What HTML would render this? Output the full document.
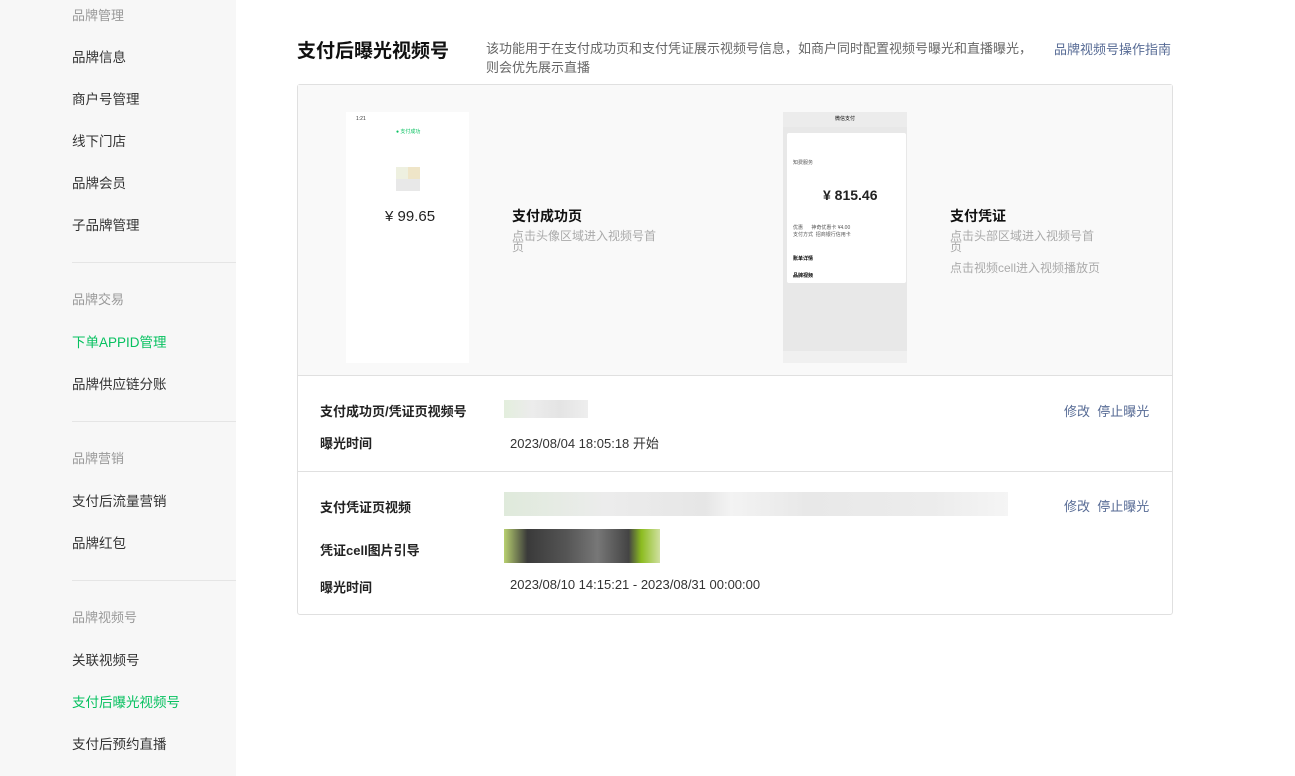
<!DOCTYPE html><html><head><meta charset="utf-8"><style>
body{margin:0;width:1295px;height:776px;overflow:hidden;background:#fff;font-family:"Liberation Sans","Noto Sans CJK SC",sans-serif;position:relative}
.a{position:absolute;white-space:nowrap}
.side{position:absolute;left:0;top:0;width:236px;height:776px;background:#f7f7f7}
.h{color:#999;font-size:13px;left:72px}
.i{color:#333;font-size:13.5px;left:72px}
.g{color:#07c160}
.d{position:absolute;left:72px;width:164px;height:1px;background:#e5e5e5}
.b{font-weight:bold;font-size:13px;color:#222;left:320px}
.v{font-size:13px;color:#333;left:510px}
.lk{color:#576b95;font-size:13px}
.px{position:absolute}
</style></head><body>
<div class="side">
<div class="a h" style="top:5px">品牌管理</div>
<div class="a i" style="top:46px">品牌信息</div>
<div class="a i" style="top:88px">商户号管理</div>
<div class="a i" style="top:130px">线下门店</div>
<div class="a i" style="top:172px">品牌会员</div>
<div class="a i" style="top:214px">子品牌管理</div>
<div class="d" style="top:262px"></div>
<div class="a h" style="top:289px">品牌交易</div>
<div class="a i g" style="top:331px">下单APPID管理</div>
<div class="a i" style="top:373px">品牌供应链分账</div>
<div class="d" style="top:421px"></div>
<div class="a h" style="top:448px">品牌营销</div>
<div class="a i" style="top:490px">支付后流量营销</div>
<div class="a i" style="top:532px">品牌红包</div>
<div class="d" style="top:580px"></div>
<div class="a h" style="top:607px">品牌视频号</div>
<div class="a i" style="top:649px">关联视频号</div>
<div class="a i g" style="top:691px">支付后曝光视频号</div>
<div class="a i" style="top:733px">支付后预约直播</div>
</div>
<div class="a" style="left:297px;top:36px;font-size:19px;font-weight:bold;color:#111">支付后曝光视频号</div>
<div class="a" style="left:486px;top:39px;font-size:13px;color:#666;line-height:19px">该功能用于在支付成功页和支付凭证展示视频号信息，如商户同时配置视频号曝光和直播曝光，<br>则会优先展示直播</div>
<div class="a lk" style="left:1054px;top:39px">品牌视频号操作指南</div>
<div class="a" style="left:297px;top:84px;width:874px;height:529px;border:1px solid #e0e0e0;border-radius:3px"></div>
<div class="a" style="left:298px;top:85px;width:874px;height:290px;background:#f9f9f9;border-bottom:1px solid #e0e0e0"></div>
<div class="a" style="left:346px;top:112px;width:123px;height:251px;background:#fff">
<div class="a" style="left:10px;top:4px;font-size:5px;color:#333">1:21</div>
<div class="a" style="left:50px;top:16px;font-size:5px;color:#07c160">● 支付成功</div>
<div class="px" style="left:50px;top:55px;width:24px;height:24px;background:#eef0e0"></div>
<div class="px" style="left:62px;top:55px;width:12px;height:12px;background:#efe5c8"></div>
<div class="px" style="left:50px;top:67px;width:24px;height:12px;background:#e8e8e8"></div>
<div class="a" style="left:39px;top:96px;font-size:15px;color:#222">¥ 99.65</div>
</div>
<div class="a" style="left:512px;top:206px;font-size:14px;font-weight:bold;color:#111">支付成功页</div>
<div class="a" style="left:512px;top:231px;font-size:12px;color:#aaa;line-height:11px">点击头像区域进入视频号首<br>页</div>
<div class="a" style="left:783px;top:112px;width:124px;height:251px;background:#e8e8e8">
<div class="a" style="left:0;top:0;width:124px;height:15px;background:#ececec;font-size:5px;text-align:center;line-height:15px">微信支付</div>
<div class="px" style="left:4px;top:21px;width:119px;height:150px;background:#fff;border-radius:2px"></div>
<div class="a" style="left:10px;top:47px;font-size:5px;color:#555">知费服务</div>
<div class="a" style="left:40px;top:75px;font-size:14px;font-weight:bold;color:#222">¥ 815.46</div>
<div class="a" style="left:10px;top:112px;font-size:5px;color:#555">优惠 &nbsp;&nbsp;&nbsp;&nbsp;&nbsp;神奇优惠卡 ¥4.00<br>支付方式 &nbsp;招商银行信用卡</div>
<div class="a" style="left:10px;top:143px;font-size:5px;font-weight:bold">账单详情</div>
<div class="a" style="left:10px;top:160px;font-size:5px;font-weight:bold">品牌视频</div>
<div class="px" style="left:0;top:239px;width:124px;height:12px;background:#f0f0f0"></div>
</div>
<div class="a" style="left:950px;top:206px;font-size:14px;font-weight:bold;color:#111">支付凭证</div>
<div class="a" style="left:950px;top:231px;font-size:12px;color:#aaa;line-height:11px">点击头部区域进入视频号首<br>页</div>
<div class="a" style="left:950px;top:259px;font-size:12px;color:#aaa">点击视频cell进入视频播放页</div>
<div class="a b" style="top:401px">支付成功页/凭证页视频号</div>
<div class="px" style="left:504px;top:400px;width:84px;height:18px;background:linear-gradient(90deg,#e3eedd,#ececec,#e4e4e4,#eee)"></div>
<div class="a lk" style="left:1064px;top:401px">修改 &nbsp;停止曝光</div>
<div class="a b" style="top:433px">曝光时间</div>
<div class="a v" style="top:433px">2023/08/04 18:05:18 开始</div>
<div class="a" style="left:298px;top:471px;width:874px;height:1px;background:#e0e0e0"></div>
<div class="a b" style="top:497px">支付凭证页视频</div>
<div class="px" style="left:504px;top:492px;width:504px;height:24px;background:linear-gradient(90deg,#dfeadb,#ececec 20%,#e6e6e6 40%,#f3f3f3 45%,#e8e8e8 60%,#ececec 85%,#f5f5f5)"></div>
<div class="a lk" style="left:1064px;top:496px">修改 &nbsp;停止曝光</div>
<div class="a b" style="top:540px">凭证cell图片引导</div>
<div class="px" style="left:504px;top:529px;width:156px;height:34px;background:linear-gradient(90deg,#b8d070,#3a3a3a 15%,#555 40%,#777 60%,#444 80%,#8cbc20 88%,#d0e0a0)"></div>
<div class="a b" style="top:577px">曝光时间</div>
<div class="a v" style="top:577px">2023/08/10 14:15:21 - 2023/08/31 00:00:00</div>
</body></html>
